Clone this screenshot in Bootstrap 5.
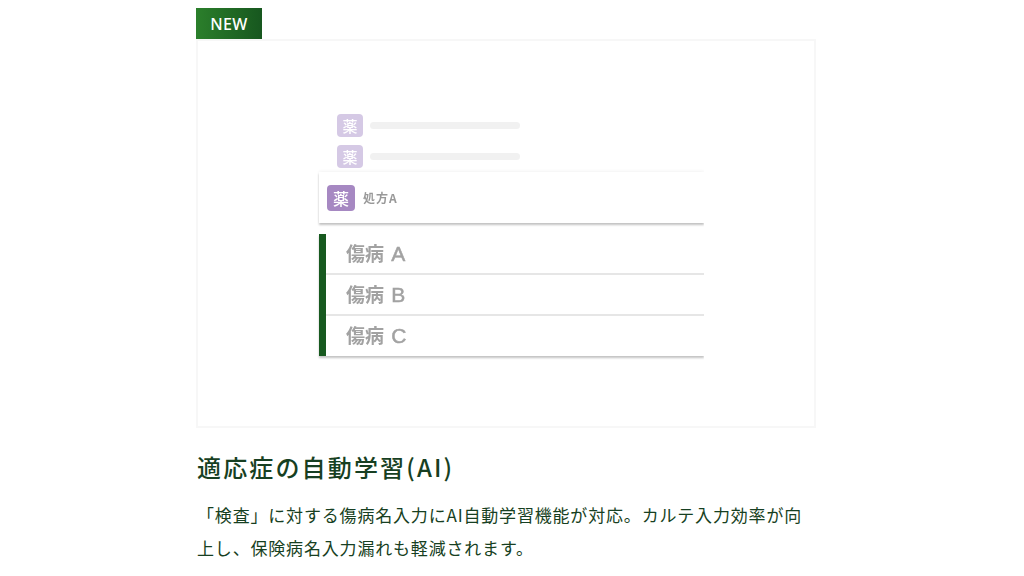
<!DOCTYPE html>
<html lang="ja">
<head>
<meta charset="utf-8">
<title>NEW</title>
<link href="https://cdn.jsdelivr.net/npm/bootstrap@5.3.0/dist/css/bootstrap.min.css" rel="stylesheet">
<style>
html,body{height:100%;overflow:hidden;background:#fff}
body{font-family:"Noto Sans CJK JP","Noto Sans",sans-serif;color:#173f22}
.page-wrap{width:620px;margin-left:196px;padding-top:8px}
.new-tag{width:66px;height:31px;background:linear-gradient(90deg,#2b7f2b,#17571f);color:#fff;font-family:"Noto Sans",sans-serif;font-weight:500;font-size:16px;line-height:33px;text-align:center;letter-spacing:.3px}
.shot-frame{height:389px;margin-top:0;border:2px solid #f7f7f7;padding:73px 0 0 121px}
.mock{width:385px;clip-path:inset(-6px 0 -6px -6px);filter:blur(.35px)}
.drug-row{margin-left:18px;height:23px;margin-bottom:8px;gap:7px}
.drug-row.tail{margin-bottom:4px}
.yaku{width:26px;height:23px;border-radius:4px;background:#d5c9e5;color:#fff;font-size:15px;font-weight:500;line-height:23px;text-align:center}
.skel{width:150px;height:7px;border-radius:4px;background:#f1f1f1}
.rx-card{height:51px;padding-left:8px;gap:8px;box-shadow:0 2px 2px rgba(0,0,0,.24),0 -1px 3px rgba(0,0,0,.05);margin-bottom:11px}
.yaku-strong{width:28px;height:26px;border-radius:4px;background:#a688c2;color:#fff;font-size:16px;font-weight:500;line-height:26px;text-align:center}
.rx-name{font-size:12px;font-weight:700;color:#999;font-family:"Noto Sans CJK JP",sans-serif;letter-spacing:1px}
.dx-list{border-left:7px solid #17591f;box-shadow:0 2px 2px rgba(0,0,0,.24)}
.dx-item{height:41px;padding-left:20px;border-bottom:2px solid #e6e6e6;font-size:19px;font-weight:700;color:#a2a2a2;line-height:38px;font-family:"Noto Sans CJK JP",sans-serif;word-spacing:3px}
.dx-item:last-child{border-bottom:0;height:40px}
.dx-item span{font-family:"Liberation Sans",sans-serif;font-size:21px;font-weight:400;-webkit-text-stroke:.5px #a2a2a2}
.ttl{margin:21px 0 0 1px;font-size:24px;font-weight:500;letter-spacing:2.15px;line-height:36px;color:#173f22}
.desc{margin:13px 0 0 1px;font-size:17px;letter-spacing:.82px;line-height:33px;color:#173f22}
</style>
</head>
<body>
<div class="page-wrap">
  <div class="new-tag">NEW</div>
  <div class="shot-frame">
    <div class="mock">
      <div class="drug-row d-flex align-items-center"><div class="yaku">薬</div><div class="skel"></div></div>
      <div class="drug-row tail d-flex align-items-center"><div class="yaku">薬</div><div class="skel"></div></div>
      <div class="rx-card d-flex align-items-center bg-white"><div class="yaku-strong">薬</div><div class="rx-name">処方A</div></div>
      <div class="dx-list bg-white">
        <div class="dx-item">傷病 <span>A</span></div>
        <div class="dx-item">傷病 <span>B</span></div>
        <div class="dx-item">傷病 <span>C</span></div>
      </div>
    </div>
  </div>
  <h2 class="ttl">適応症の自動学習(AI)</h2>
  <p class="desc">「検査」に対する傷病名入力にAI自動学習機能が対応。カルテ入力効率が向上し、保険病名入力漏れも軽減されます。</p>
</div>
</body>
</html>
